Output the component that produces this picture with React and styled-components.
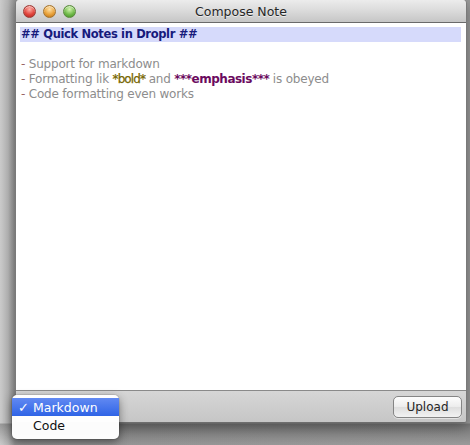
import React from "react";
import styled, { createGlobalStyle } from "styled-components";

const GlobalStyle = createGlobalStyle`
  html, body { margin: 0; padding: 0; }
  body { background: #a8a8a8; font-family: "DejaVu Sans", "Liberation Sans", sans-serif; }
`;

const Desktop = styled.div`
  position: relative;
  width: 470px;
  height: 445px;
  overflow: hidden;
  box-sizing: border-box;
  padding-left: 15px;
  background:
    linear-gradient(180deg, rgba(0,0,0,0) 0, rgba(0,0,0,0) 423px, rgba(60,60,60,0.35) 424px, rgba(0,0,0,0) 445px),
    linear-gradient(90deg, #cbcbcb 0, #b6b6b6 8px, #939393 15px, #9a9a9a 100%);
`;

const Window = styled.div`
  width: 452px;
  height: 423px;
  display: flex;
  flex-direction: column;
  box-sizing: border-box;
  border-left: 1px solid #7a7a7a;
  border-right: 1px solid #7a7a7a;
  border-bottom: 1px solid #6e6e6e;
  border-radius: 4px 4px 3px 3px;
  overflow: hidden;
  background: #c4c4c4;
  box-shadow: 0 4px 14px rgba(0,0,0,0.35);
`;

const TitleBar = styled.div`
  height: 22px;
  flex: none;
  display: grid;
  grid-template-columns: 1fr auto 1fr;
  align-items: center;
  background: linear-gradient(180deg, #ececec 0%, #dcdcdc 45%, #c6c6c6 100%);
  border-bottom: 1px solid #6a6a6a;
`;

const Lights = styled.div`
  display: flex;
  gap: 7px;
  padding-left: 7px;
  align-items: center;
`;

const Light = styled.span`
  width: 13px;
  height: 13px;
  border-radius: 50%;
  box-sizing: border-box;
  border: 1px solid ${(p) => p.$edge};
  background: radial-gradient(circle at 50% 30%, ${(p) => p.$hi} 0, ${(p) => p.$c} 55%, ${(p) => p.$lo} 100%);
  box-shadow: inset 0 1px 1px rgba(255,255,255,0.6);
`;

const Title = styled.div`
  font-size: 12.5px;
  color: #262626;
  text-shadow: 0 1px 0 rgba(255,255,255,0.6);
  padding-top: 1px;
`;

const Editor = styled.div`
  flex: 1;
  background: #ffffff;
  padding: 4px 5px 0 4px;
  font-size: 12px;
  letter-spacing: -0.2px;
  line-height: 15px;
  color: #8d8d8d;
  border-bottom: 1px solid #8a8a8a;
`;

const Heading = styled.div`
  background: #d6dafb;
  color: #171a7c;
  font-weight: bold;
  font-size: 11.5px;
  letter-spacing: -0.35px;
  padding-left: 1px;
  height: 15px;
`;

const Line = styled.div`
  height: 15px;
  padding-left: 1px;
  white-space: pre;
`;

const Dash = styled.span`
  color: #9a6464;
`;

const Strong = styled.span`
  color: #776600;
  letter-spacing: -0.9px;
  -webkit-text-stroke: 0.25px #776600;
`;

const Emph = styled.span`
  color: #6b0a5e;
  font-weight: bold;
  letter-spacing: -0.5px;
`;

const BottomBar = styled.div`
  height: 31px;
  flex: none;
  display: flex;
  align-items: center;
  justify-content: flex-end;
  padding-right: 4px;
  background: linear-gradient(180deg, #d6d6d6 0%, #c6c6c6 100%);
`;

const Button = styled.button`
  width: 69px;
  height: 22px;
  border: 1px solid #858585;
  border-radius: 5px;
  background: linear-gradient(180deg, #fdfdfd 0%, #ececec 50%, #dedede 51%, #f2f2f2 100%);
  font-family: "DejaVu Sans", sans-serif;
  font-size: 12px;
  color: #262626;
  padding: 0;
  box-shadow: 0 1px 0 rgba(255,255,255,0.5);
`;

const Menu = styled.div`
  position: absolute;
  left: 12px;
  top: 395px;
  width: 107px;
  padding: 3px 0 5px;
  background: rgba(255,255,255,0.98);
  border-radius: 5px;
  box-shadow: 0 3px 10px rgba(0,0,0,0.45), 0 0 0 1px rgba(0,0,0,0.08);
  font-size: 12.5px;
`;

const MenuItem = styled.div`
  height: 18px;
  display: flex;
  align-items: center;
  padding-left: 6px;
  color: ${(p) => (p.$selected ? "#ffffff" : "#111111")};
  background: ${(p) => (p.$selected ? "linear-gradient(180deg, #6189f2 0%, #2f64e6 100%)" : "transparent")};
`;

const Check = styled.span`
  width: 15px;
  display: inline-block;
  font-size: 13px;
  font-weight: bold;
`;

export default function App() {
  return (
    <>
      <GlobalStyle />
      <Desktop>
        <Window>
          <TitleBar>
            <Lights>
              <Light $c="#e2453d" $hi="#ffb0a8" $lo="#a8201a" $edge="#9c3a34" />
              <Light $c="#e9a23a" $hi="#ffe2a8" $lo="#b56a12" $edge="#a4742c" />
              <Light $c="#72bb4b" $hi="#d4f5b0" $lo="#3c8a1e" $edge="#5a8a3c" />
            </Lights>
            <Title>Compose Note</Title>
            <div />
          </TitleBar>
          <Editor>
            <Heading>## Quick Notes in Droplr ##</Heading>
            <Line> </Line>
            <Line><Dash>- </Dash>Support for markdown</Line>
            <Line>
              <Dash>- </Dash>Formatting lik <Strong>*bold*</Strong> and <Emph>***emphasis***</Emph> is obeyed
            </Line>
            <Line><Dash>- </Dash>Code formatting even works</Line>
          </Editor>
          <BottomBar>
            <Button>Upload</Button>
          </BottomBar>
        </Window>
        <Menu>
          <MenuItem $selected><Check>✓</Check>Markdown</MenuItem>
          <MenuItem><Check></Check>Code</MenuItem>
        </Menu>
      </Desktop>
    </>
  );
}
